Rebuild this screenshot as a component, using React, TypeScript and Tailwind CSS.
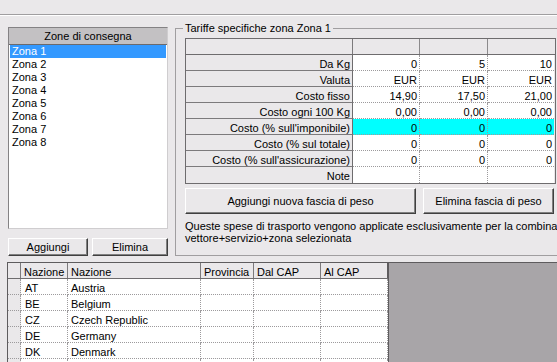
const zones = ['Zona 1', 'Zona 2', 'Zona 3', 'Zona 4', 'Zona 5', 'Zona 6', 'Zona 7', 'Zona 8'];

const tariffRows = [
  { label: 'Da Kg', vals: ['0', '5', '10'] },
  { label: 'Valuta', vals: ['EUR', 'EUR', 'EUR'] },
  { label: 'Costo fisso', vals: ['14,90', '17,50', '21,00'] },
  { label: 'Costo ogni 100 Kg', vals: ['0,00', '0,00', '0,00'] },
  { label: "Costo (% sull'imponibile)", vals: ['0', '0', '0'], hl: true },
  { label: 'Costo (% sul totale)', vals: ['0', '0', '0'] },
  { label: "Costo (% sull'assicurazione)", vals: ['0', '0', '0'] },
  { label: 'Note', vals: ['', '', ''] },
];

const nations = [
  ['AT', 'Austria'],
  ['BE', 'Belgium'],
  ['CZ', 'Czech Republic'],
  ['DE', 'Germany'],
  ['DK', 'Denmark'],
  ['', ''],
];

const dataW = ['w-[67px]', 'w-[68px]', 'w-[66px]'];

// classic raised windows button
const btn =
  'flex items-center justify-center border border-t-white border-l-white border-r-[#404040] border-b-[#404040] shadow-[inset_-1px_-1px_0_#808080] bg-[#eae8ea]';

export default function App() {
  return (
    <div
      className="w-[557px] h-[362px] overflow-hidden bg-[#eae8ea] text-black text-[11px] flex flex-col"
      style={{ fontFamily: '"Liberation Sans", Arial, sans-serif' }}
    >
      <div className="h-[14px] shrink-0" />
      <div className="h-[2px] shrink-0 border-t border-[#a09ea0] border-b border-b-white" />

      <div className="mt-[11px] flex items-start pl-[8px] shrink-0">
        {/* zones list */}
        <div className="w-[160px] flex flex-col">
          <div className="h-[202px] flex flex-col border-l border-t border-[#848284] border-r border-r-[#cfcdcf] border-b border-b-[#cfcdcf] bg-white">
            <div className="h-[17px] shrink-0 bg-[#c3c1c3] border-b border-[#6c6a6c] flex items-center justify-center leading-[16px]">
              Zone di consegna
            </div>
            <div className="flex flex-col pl-[1px] pr-[1px]">
              {zones.map((z, i) => (
                <div
                  key={z}
                  className={`h-[13px] leading-[13px] pl-[2px] ${i === 0 ? 'bg-[#3399ff] text-white' : ''}`}
                >
                  {z}
                </div>
              ))}
            </div>
          </div>
          <div className="mt-[9px] flex gap-[4px]">
            <div className={`${btn} w-[80px] h-[18px]`}>Aggiungi</div>
            <div className={`${btn} w-[76px] h-[18px]`}>Elimina</div>
          </div>
        </div>

        {/* tariff group box */}
        <div className="relative ml-[7px] mt-[1px] w-[400px] h-[228px] shrink-0 border-l border-t border-b border-[#a09ea0] pl-[9px] pt-[9px]">
          <span className="absolute left-[7px] top-[-8px] px-[2px] leading-[14px] bg-[#eae8ea]">
            Tariffe specifiche zona Zona 1
          </span>

          <div className="w-[371px] border border-[#6e6c6e]">
            <div className="flex h-[16px] border-b border-[#6e6c6e]">
              <div className="w-[167px] border-r border-[#7c7a7c]" />
              <div className="w-[67px] border-r border-[#8c8a8c]" />
              <div className="w-[68px] border-r border-[#8c8a8c]" />
              <div className="w-[66px]" />
            </div>
            {tariffRows.map((r, ri) => (
              <div key={r.label} className="flex h-[16px]">
                <div
                  className={`w-[167px] border-r border-[#6e6c6e] text-right pr-[2px] leading-[16px] pt-[1px] ${ri < tariffRows.length - 1 ? 'border-b border-b-[#7c7a7c]' : ''}`}
                >
                  {r.label}
                </div>
                {r.vals.map((v, vi) => (
                  <div
                    key={vi}
                    className={`${dataW[vi]} text-right pr-[2px] leading-[16px] pt-[1px] border-dotted border-[#9c9a9c] ${vi < 2 ? 'border-r' : ''} ${ri < tariffRows.length - 1 ? 'border-b' : ''} ${r.hl ? 'bg-[#00ffff]' : 'bg-white'}`}
                  >
                    {v}
                  </div>
                ))}
              </div>
            ))}
          </div>

          <div className="mt-[4px] flex gap-[7px]">
            <div className={`${btn} w-[231px] h-[26px]`}>Aggiungi nuova fascia di peso</div>
            <div className={`${btn} w-[131px] h-[26px] shrink-0`}>Elimina fascia di peso</div>
          </div>

          <div className="mt-[6px] leading-[12px] whitespace-nowrap">
            <div>Queste spese di trasporto vengono applicate esclusivamente per la combinazione</div>
            <div>vettore+servizio+zona selezionata</div>
          </div>
        </div>
      </div>

      {/* nations grid */}
      <div className="mt-[6px] ml-[7px] flex flex-1 border-l border-t border-[#5e5c5e]">
        <div className="flex flex-col w-[380px] shrink-0">
          <div className="flex h-[16px] border-b border-[#6e6c6e]">
            <div className="w-[13px] border-r border-[#7c7a7c]" />
            <div className="w-[47px] border-r border-[#7c7a7c] pl-[3px] leading-[16px] pt-[1px]">Nazione</div>
            <div className="w-[133px] border-r border-[#7c7a7c] pl-[3px] leading-[16px] pt-[1px]">Nazione</div>
            <div className="w-[53px] border-r border-[#7c7a7c] pl-[3px] leading-[16px] pt-[1px]">Provincia</div>
            <div className="w-[67px] border-r border-[#7c7a7c] pl-[3px] leading-[16px] pt-[1px]">Dal CAP</div>
            <div className="w-[67px] border-r border-[#5e5c5e] pl-[3px] leading-[16px] pt-[1px]">Al CAP</div>
          </div>
          {nations.map(([code, name], i) => (
            <div key={i} className="flex h-[16px]">
              <div className="w-[13px] border-r border-b border-dotted border-[#9c9a9c]" />
              <div className="w-[47px] bg-white border-r border-b border-dotted border-[#9c9a9c] pl-[4px] leading-[16px] pt-[1px]">{code}</div>
              <div className="w-[133px] bg-white border-r border-b border-dotted border-[#9c9a9c] pl-[3px] leading-[16px] pt-[1px]">{name}</div>
              <div className="w-[53px] bg-white border-r border-b border-dotted border-[#9c9a9c]" />
              <div className="w-[67px] bg-white border-r border-b border-dotted border-[#9c9a9c]" />
              <div className="w-[67px] bg-white border-b border-dotted border-[#9c9a9c] border-r border-r-solid" />
            </div>
          ))}
        </div>
        <div className="flex-1 bg-[#a8a5a8] border-l border-[#5e5c5e]" />
      </div>
    </div>
  );
}
